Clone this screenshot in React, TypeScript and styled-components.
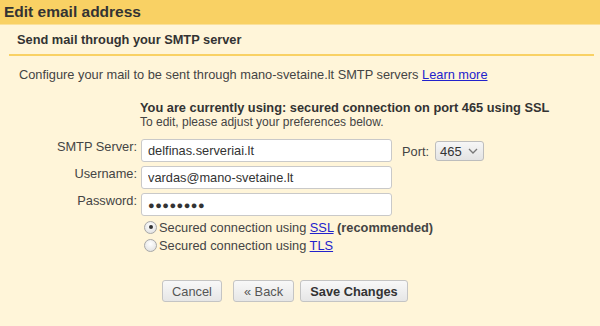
import React from "react";
import styled, { createGlobalStyle } from "styled-components";

const Global = createGlobalStyle`
  html, body {
    margin: 0;
    padding: 0;
    background: #fff5d9;
  }
  body {
    font-family: "Liberation Sans", Arial, sans-serif;
    color: #444;
  }
`;

const Page = styled.div`
  width: 600px;
  height: 326px;
  background: #fff5d9;
  overflow: hidden;
`;

const TitleBar = styled.div`
  height: 24px;
  background: #f9d164;
  border-bottom: 1px solid #fbe19a;
  padding-left: 4px;
  font-size: 15.5px;
  font-weight: bold;
  color: #333;
  line-height: 24px;
`;

const SubHead = styled.div`
  margin: 0 6px 0 9px;
  padding: 7px 0 0 8px;
  height: 22px;
  border-bottom: 2px solid #f9d164;
  font-size: 12.8px;
  font-weight: bold;
  color: #333;
`;

const Intro = styled.p`
  margin: 11px 0 0 19px;
  font-size: 12.8px;
  color: #444;
`;

const Link = styled.a`
  color: #2222cc;
  text-decoration: underline;
  cursor: pointer;
`;

const Status = styled.div`
  margin: 18px 0 0 140px;
  font-size: 12.8px;
  font-weight: bold;
  color: #333;
  line-height: 15px;
`;

const Hint = styled.div`
  margin-left: 140px;
  font-size: 12px;
  color: #444;
  line-height: 14px;
`;

const Form = styled.div`
  margin-top: 10px;
  display: grid;
  grid-template-columns: 137px 251px auto;
  column-gap: 4px;
  row-gap: 4px;
  align-items: start;
`;

const Label = styled.label`
  font-size: 12.8px;
  color: #444;
  text-align: right;
`;

const Input = styled.input<{ $dots?: boolean }>`
  box-sizing: border-box;
  width: 251px;
  height: 23px;
  border: 1px solid #c9c9c9;
  border-radius: 3px;
  background: #fff;
  padding: 0 6px;
  font-family: "Liberation Sans", Arial, sans-serif;
  font-size: ${(p) => (p.$dots ? "11px" : "12.8px")};
  letter-spacing: ${(p) => (p.$dots ? "0.5px" : "0")};
  color: #333;
  outline: none;
`;

const PortCell = styled.div`
  display: flex;
  align-items: center;
  gap: 6px;
  padding-left: 6px;
  padding-top: 2px;
  font-size: 12.8px;
  color: #444;
`;

const Select = styled.div`
  box-sizing: border-box;
  width: 49px;
  height: 20px;
  border: 1px solid #bdbdbd;
  border-radius: 3px;
  background: linear-gradient(#f6f6f6, #e3e3e3);
  display: flex;
  align-items: center;
  justify-content: space-between;
  padding: 0 5px 0 4px;
  font-size: 13px;
  color: #333;
`;

const Radios = styled.div`
  margin: 3px 0 0 144px;
  display: flex;
  flex-direction: column;
  gap: 2px;
`;

const RadioRow = styled.div`
  display: flex;
  align-items: center;
  gap: 2px;
  font-size: 12.8px;
  color: #444;
  height: 16px;
`;

const RadioDot = styled.span<{ $on?: boolean }>`
  box-sizing: border-box;
  width: 13px;
  height: 13px;
  border-radius: 50%;
  border: 1px solid #a8a8a8;
  background: radial-gradient(circle at 50% 35%, #ffffff, #dcdcdc);
  display: flex;
  align-items: center;
  justify-content: center;
  &::after {
    content: "";
    width: 4px;
    height: 4px;
    border-radius: 50%;
    background: ${(p) => (p.$on ? "#333" : "transparent")};
  }
`;

const Buttons = styled.div`
  margin: 27px 0 0 162px;
  display: flex;
`;

const Button = styled.button<{ $primary?: boolean; $w: number; $gap?: number }>`
  box-sizing: border-box;
  width: ${(p) => p.$w}px;
  height: 22px;
  margin-left: ${(p) => p.$gap ?? 0}px;
  padding: 0;
  border: 1px solid #c4c4c4;
  border-radius: 3px;
  background: linear-gradient(#f8f8f8, #e6e6e6);
  font-family: "Liberation Sans", Arial, sans-serif;
  font-size: 12.8px;
  font-weight: ${(p) => (p.$primary ? "bold" : "normal")};
  color: ${(p) => (p.$primary ? "#333" : "#555")};
  cursor: pointer;
`;

export default function App() {
  return (
    <Page>
      <Global />
      <TitleBar>Edit email address</TitleBar>
      <SubHead>Send mail through your SMTP server</SubHead>
      <Intro>
        Configure your mail to be sent through mano-svetaine.lt SMTP servers{" "}
        <Link>Learn more</Link>
      </Intro>
      <Status>You are currently using: secured connection on port 465 using SSL</Status>
      <Hint>To edit, please adjust your preferences below.</Hint>
      <Form>
        <Label>SMTP Server:</Label>
        <Input defaultValue="delfinas.serveriai.lt" />
        <PortCell>
          Port:
          <Select>
            465
            <svg width="10" height="6" viewBox="0 0 10 6">
              <path d="M1 1 L5 5 L9 1" fill="none" stroke="#777" strokeWidth="1.3" />
            </svg>
          </Select>
        </PortCell>
        <Label>Username:</Label>
        <Input defaultValue="vardas@mano-svetaine.lt" />
        <span />
        <Label>Password:</Label>
        <Input $dots readOnly value="●●●●●●●●" />
        <span />
      </Form>
      <Radios>
        <RadioRow>
          <RadioDot $on />
          <span>
            Secured connection using <Link>SSL</Link> <b>(recommended)</b>
          </span>
        </RadioRow>
        <RadioRow>
          <RadioDot />
          <span>
            Secured connection using <Link>TLS</Link>
          </span>
        </RadioRow>
      </Radios>
      <Buttons>
        <Button $w={60}>Cancel</Button>
        <Button $w={61} $gap={11}>« Back</Button>
        <Button $w={108} $gap={6} $primary>Save Changes</Button>
      </Buttons>
    </Page>
  );
}
